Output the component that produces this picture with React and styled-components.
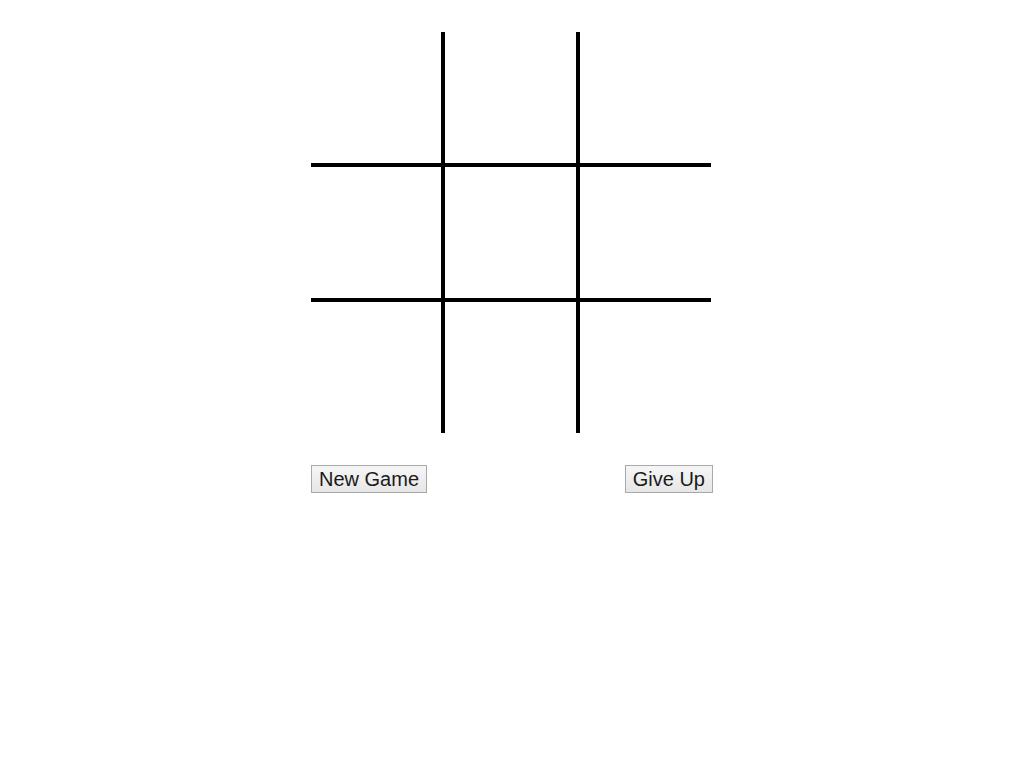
import React from "react";
import styled, { createGlobalStyle } from "styled-components";

const Global = createGlobalStyle`
  html, body { margin: 0; padding: 0; background: #fff; }
  body { font-family: "Liberation Sans", Arial, sans-serif; }
`;

const Page = styled.div`
  display: flex;
  justify-content: center;
  padding-top: 32px;
`;

const Game = styled.div`
  width: 402px;
  display: flex;
  flex-direction: column;
`;

const Board = styled.div`
  display: grid;
  grid-template-columns: 130px 131px 131px;
  grid-template-rows: 131px 131px 131px;
  gap: 4px;
  background: #000;
  width: 400px;
  height: 401px;
`;

const Cell = styled.div`
  background: #fff;
`;

const Controls = styled.div`
  display: flex;
  justify-content: space-between;
  margin-top: 32px;
`;

const Button = styled.button`
  font-family: "Liberation Sans", Arial, sans-serif;
  font-size: 20px;
  line-height: 22px;
  color: #1a1a1a;
  padding: 2px 7px;
  height: 28px;
  border: 1px solid #a9a9a9;
  border-radius: 0;
  background: linear-gradient(#f6f6f6, #e6e6e6);
  cursor: pointer;
`;

export default function App() {
  return (
    <>
      <Global />
      <Page>
        <Game>
          <Board>
            {Array.from({ length: 9 }).map((_, i) => (
              <Cell key={i} />
            ))}
          </Board>
          <Controls>
            <Button>New Game</Button>
            <Button>Give Up</Button>
          </Controls>
        </Game>
      </Page>
    </>
  );
}
